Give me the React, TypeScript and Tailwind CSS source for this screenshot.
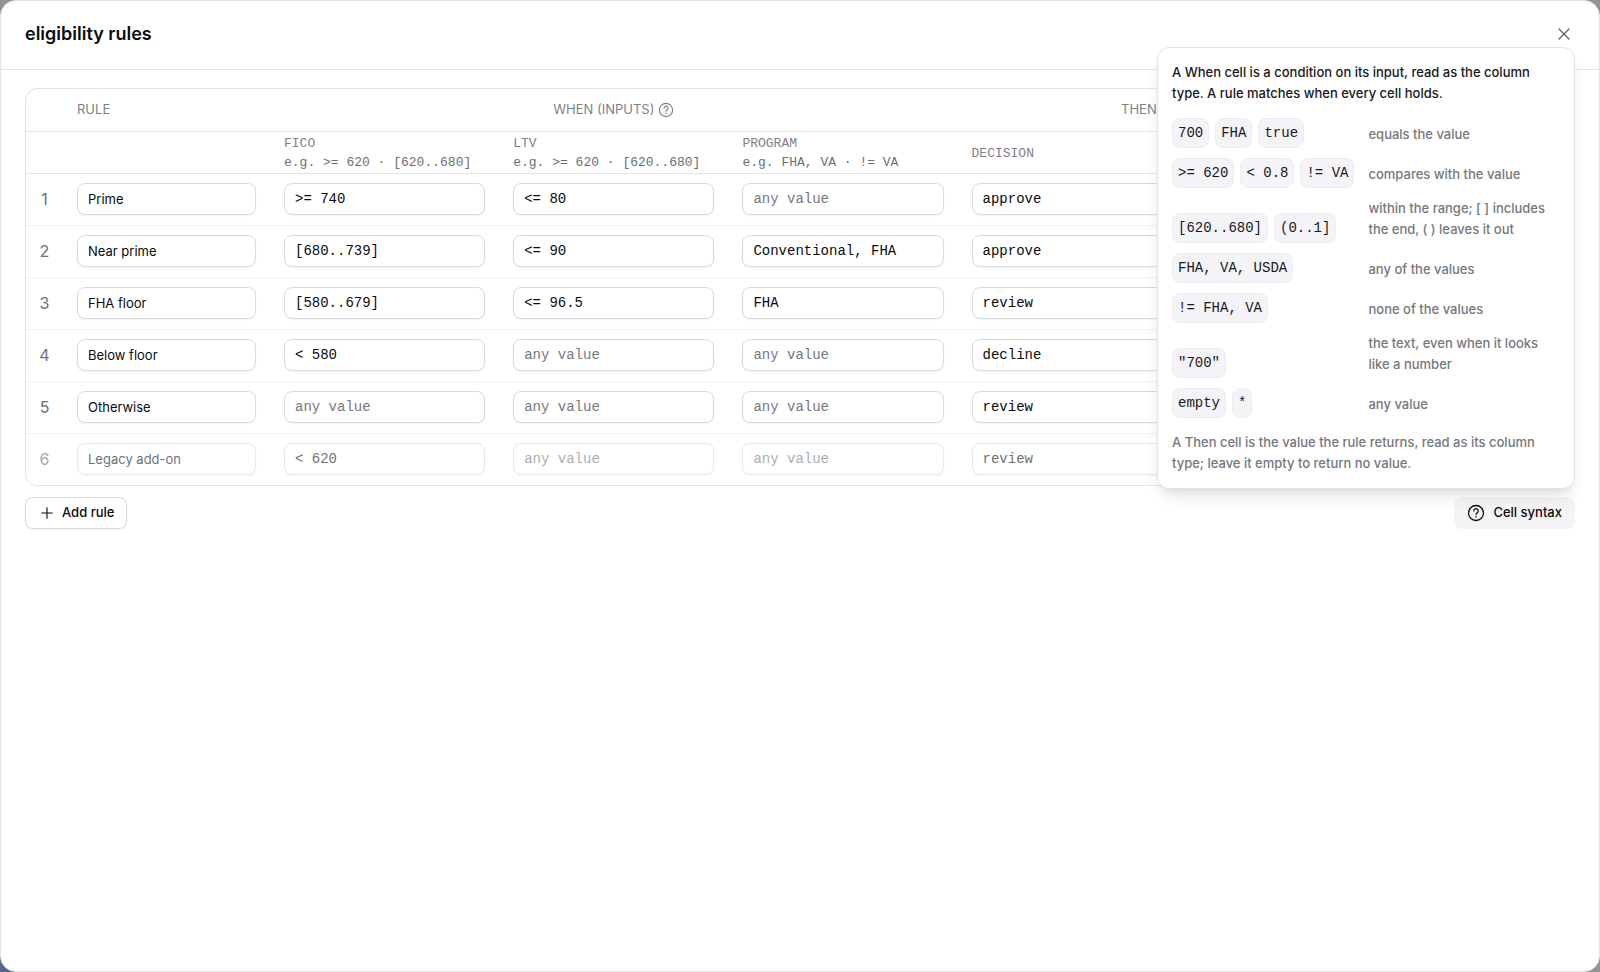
import { Plus, X } from "lucide-react";

interface Rule {
  name: string;
  fico: string;
  ltv: string;
  program: string;
  decision: string;
  disabled?: boolean;
}

const RULES: Rule[] = [
  { name: "Prime", fico: ">= 740", ltv: "<= 80", program: "", decision: "approve" },
  { name: "Near prime", fico: "[680..739]", ltv: "<= 90", program: "Conventional, FHA", decision: "approve" },
  { name: "FHA floor", fico: "[580..679]", ltv: "<= 96.5", program: "FHA", decision: "review" },
  { name: "Below floor", fico: "< 580", ltv: "", program: "", decision: "decline" },
  { name: "Otherwise", fico: "", ltv: "", program: "", decision: "review" },
  { name: "Legacy add-on", fico: "< 620", ltv: "", program: "", decision: "review", disabled: true },
];

const INPUTS = [
  { label: "FICO", hint: "e.g. >= 620 · [620..680]" },
  { label: "LTV", hint: "e.g. >= 620 · [620..680]" },
  { label: "PROGRAM", hint: "e.g. FHA, VA · != VA" },
];

const SYNTAX = [
  { codes: ["700", "FHA", "true"], text: "equals the value" },
  { codes: [">= 620", "< 0.8", "!= VA"], text: "compares with the value" },
  { codes: ["[620..680]", "(0..1]"], text: "within the range; [ ] includes the end, ( ) leaves it out" },
  { codes: ["FHA, VA, USDA"], text: "any of the values" },
  { codes: ["!= FHA, VA"], text: "none of the values" },
  { codes: ['"700"'], text: "the text, even when it looks like a number" },
  { codes: ["empty", "*"], text: "any value" },
];

const MONO = "font-['Liberation_Mono',monospace]";

function HelpIcon({ className }: { className?: string }) {
  return (
    <svg viewBox="0 0 24 24" fill="none" stroke="currentColor" strokeWidth="1.7" strokeLinecap="round" strokeLinejoin="round" className={className} aria-hidden="true">
      <circle cx="12" cy="12" r="10" />
      <path d="M9 9.2a3 3 0 1 1 4.9 2.3C13 12.2 12 12.9 12 14" />
      <path d="M12 17v.01" strokeWidth="2.2" />
    </svg>
  );
}

function CellInput({ value, label, mono = true }: { value: string; label: string; mono?: boolean }) {
  return (
    <input
      type="text"
      defaultValue={value}
      aria-label={label}
      placeholder="any value"
      className={`block h-8 w-full rounded-lg border border-[#d9dade] bg-white px-2.5 text-[#0b0b0d] shadow-xs outline-none placeholder:text-[#76777c] ${mono ? `${MONO} text-sm` : "text-[13px]"}`}
    />
  );
}

function SyntaxPopover() {
  return (
    <div
      role="dialog"
      aria-label="Cell syntax"
      className="absolute right-0 bottom-full z-10 mb-2 flex w-[418px] flex-col gap-3.5 rounded-xl border border-[#e4e4e7] bg-white p-3.5 text-[13px] leading-[21px] text-[#76777c] shadow-lg"
    >
      <p className="text-[#18181b]">
        A When cell is a condition on its input, read as the column type. A rule matches when every cell holds.
      </p>
      <dl className="grid grid-cols-[auto_1fr] items-end gap-x-3.5 gap-y-2.5">
        {SYNTAX.map((row) => (
          <div key={row.text} className="contents">
            <dt className="flex gap-1.5">
              {row.codes.map((code) => (
                <code
                  key={code}
                  className={`flex h-[30px] items-center rounded-lg border border-[#ececf2] bg-[#f4f4f8] px-[5px] text-sm whitespace-pre text-[#18181b] ${MONO}`}
                >
                  {code}
                </code>
              ))}
            </dt>
            <dd className="pb-[3px]">{row.text}</dd>
          </div>
        ))}
      </dl>
      <p>A Then cell is the value the rule returns, read as its column type; leave it empty to return no value.</p>
    </div>
  );
}

export default function App() {
  return (
    <div className="min-h-screen bg-linear-to-tr from-[#4f658c] to-[#929397] to-10% font-['Inter',sans-serif] text-[#0b0b0d]">
      <div role="dialog" aria-labelledby="dialog-title" className="flex min-h-screen flex-col rounded-2xl border border-[#e4e4e7] bg-white">
        <header className="flex h-[69px] items-start justify-between border-b border-[#e4e4e7] px-6 pt-[19px]">
          <h2 id="dialog-title" className="text-lg leading-7 font-semibold">
            eligibility rules
          </h2>
          <button type="button" aria-label="Close" className="flex h-7 w-[22px] items-center justify-center text-[#5f6066]">
            <X size={20} strokeWidth={1.5} />
          </button>
        </header>

        <main className="flex flex-col gap-[11px] px-6 pt-[18px]">
          <div className="overflow-hidden rounded-xl border border-[#e4e4e7]">
            <table className="w-full table-fixed border-collapse text-left">
              <colgroup>
                <col className="w-[37px]" />
                <col className="w-[207px]" />
                <col />
                <col />
                <col />
                <col />
                <col />
                <col className="w-[158px]" />
              </colgroup>
              <thead className="text-[13px] leading-[19px] text-[#808187]">
                <tr className="h-[42px] border-b border-[#e4e4e7]">
                  <th />
                  <th className="px-3.5 font-normal">RULE</th>
                  <th colSpan={3} className="font-normal">
                    <div className="flex items-center justify-center gap-1">
                      WHEN (INPUTS)
                      <HelpIcon className="size-4" />
                    </div>
                  </th>
                  <th colSpan={2} className="font-normal">
                    <div className="flex items-center justify-center gap-1">
                      THEN (OUTPUTS)
                      <HelpIcon className="size-4" />
                    </div>
                  </th>
                  <th />
                </tr>
                <tr className={`h-[42px] border-b border-[#e4e4e7] ${MONO}`}>
                  <th />
                  <th />
                  {INPUTS.map((col) => (
                    <th key={col.label} className="px-3.5 pt-0.5 font-normal whitespace-nowrap">
                      <div>{col.label}</div>
                      <div className="text-[#6d6e74]">{col.hint}</div>
                    </th>
                  ))}
                  <th className="px-3.5 pt-0.5 font-normal">DECISION</th>
                  <th />
                  <th />
                </tr>
              </thead>
              <tbody>
                {RULES.map((rule, i) => (
                  <tr key={rule.name} className={`h-[52px] border-b border-[#f0f0f4] last:border-b-0 ${rule.disabled ? "opacity-60" : ""}`}>
                    <td className="text-center text-base text-[#6d6e74]">{i + 1}</td>
                    <td className="px-3.5">
                      <CellInput value={rule.name} label={`Rule ${i + 1} name`} mono={false} />
                    </td>
                    <td className="px-3.5">
                      <CellInput value={rule.fico} label={`Rule ${i + 1} FICO`} />
                    </td>
                    <td className="px-3.5">
                      <CellInput value={rule.ltv} label={`Rule ${i + 1} LTV`} />
                    </td>
                    <td className="px-3.5">
                      <CellInput value={rule.program} label={`Rule ${i + 1} program`} />
                    </td>
                    <td className="px-3.5">
                      <CellInput value={rule.decision} label={`Rule ${i + 1} decision`} />
                    </td>
                    <td />
                    <td />
                  </tr>
                ))}
              </tbody>
            </table>
          </div>

          <div className="flex items-center justify-between text-[13px] font-medium">
            <button type="button" className="flex h-8 items-center gap-1.5 rounded-lg border border-[#d9dade] bg-white px-3 shadow-xs">
              <Plus size={18} strokeWidth={1.5} />
              Add rule
            </button>
            <div className="relative">
              <SyntaxPopover />
              <button type="button" aria-expanded="true" className="flex h-8 items-center gap-2 rounded-lg bg-[#f4f4f5] px-[13px]">
                <HelpIcon className="size-[18px]" />
                Cell syntax
              </button>
            </div>
          </div>
        </main>
      </div>
    </div>
  );
}
